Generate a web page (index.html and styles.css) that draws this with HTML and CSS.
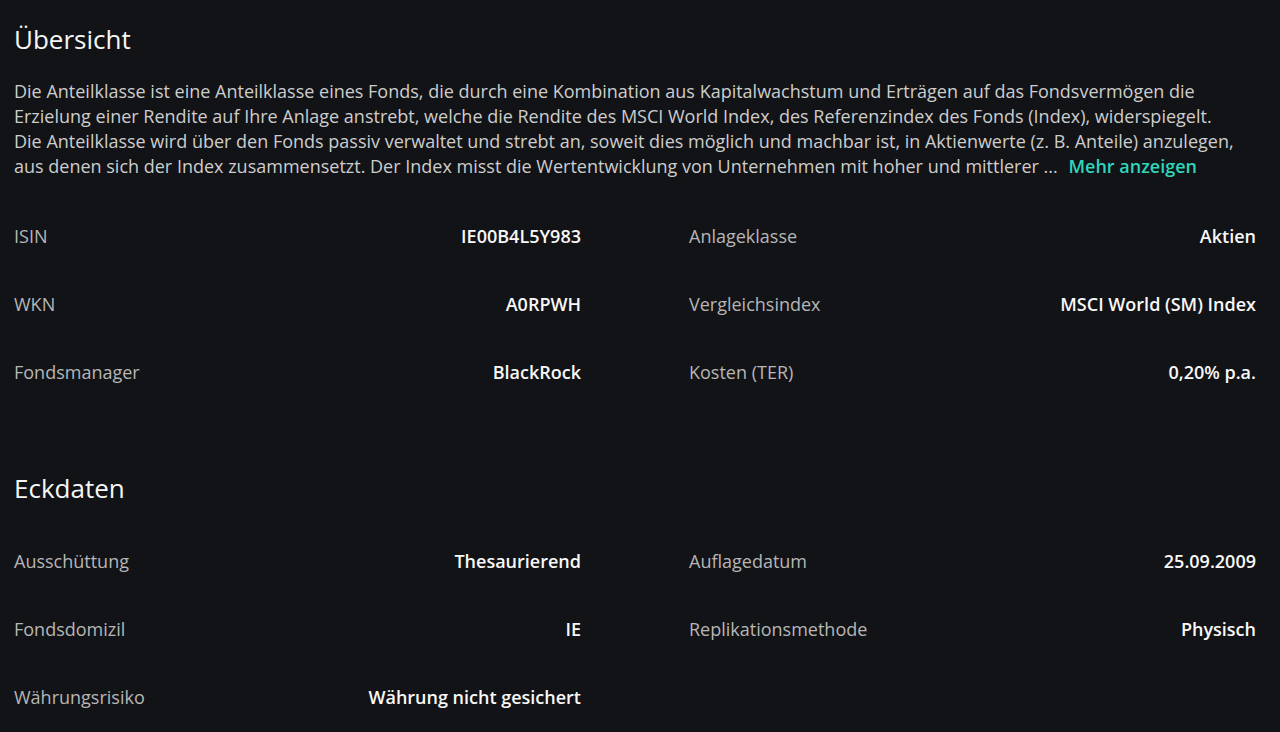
FILE: index.html
```html
<!DOCTYPE html>
<html lang="de">
<head>
<meta charset="utf-8">
<title>Übersicht</title>
<link rel="stylesheet" href="styles.css">
</head>
<body>
<main class="page">
  <section class="section">
    <h2 class="title">Übersicht</h2>
    <p class="desc">Die Anteilklasse ist eine Anteilklasse eines Fonds, die durch eine Kombination aus Kapitalwachstum und Erträgen auf das Fondsvermögen die Erzielung einer Rendite auf Ihre Anlage anstrebt, welche die Rendite des MSCI World Index, des Referenzindex des Fonds (Index), widerspiegelt. Die Anteilklasse wird über den Fonds passiv verwaltet und strebt an, soweit dies möglich und machbar ist, in Aktienwerte (z. B. Anteile) anzulegen, aus denen sich der Index zusammensetzt. Der Index misst die Wertentwicklung von Unternehmen mit hoher und mittlerer ... <a class="more" href="#">Mehr anzeigen</a></p>
    <div class="grid">
      <div class="row"><span class="label">ISIN</span><span class="value">IE00B4L5Y983</span></div>
      <div class="row"><span class="label">Anlageklasse</span><span class="value">Aktien</span></div>
      <div class="row"><span class="label">WKN</span><span class="value">A0RPWH</span></div>
      <div class="row"><span class="label">Vergleichsindex</span><span class="value">MSCI World (SM) Index</span></div>
      <div class="row"><span class="label">Fondsmanager</span><span class="value">BlackRock</span></div>
      <div class="row"><span class="label">Kosten (TER)</span><span class="value">0,20% p.a.</span></div>
    </div>
  </section>
  <section class="section section-second">
    <h2 class="title">Eckdaten</h2>
    <div class="grid">
      <div class="row"><span class="label">Ausschüttung</span><span class="value">Thesaurierend</span></div>
      <div class="row"><span class="label">Auflagedatum</span><span class="value">25.09.2009</span></div>
      <div class="row"><span class="label">Fondsdomizil</span><span class="value">IE</span></div>
      <div class="row"><span class="label">Replikationsmethode</span><span class="value">Physisch</span></div>
      <div class="row"><span class="label">Währungsrisiko</span><span class="value">Währung nicht gesichert</span></div>
    </div>
  </section>
</main>
</body>
</html>
```
FILE: styles.css
```css
html, body {
  margin: 0;
  padding: 0;
  background: #121316;
}
body {
  font-family: "Open Sans", "Noto Sans", sans-serif;
  color: #f2f2f2;
  height: 732px;
  overflow: hidden;
}
.page {
  padding: 21px 24px 0 14px;
}
.title {
  margin: 0;
  font-size: 26px;
  line-height: 36px;
  font-weight: 500;
  color: #f6f6f6;
}
.desc {
  margin: 22px 0 0 0;
  max-width: 1224px;
  font-size: 18px;
  line-height: 25px;
  color: #cdcdcd;
}
.more {
  color: #2fd6bb;
  font-weight: 600;
  text-decoration: none;
  margin-left: 6px;
}
.grid {
  display: grid;
  grid-template-columns: 1fr 1fr;
  column-gap: 108px;
  margin-top: 23px;
}
.section-second {
  margin-top: 64px;
}
.section-second .grid {
  margin-top: 21px;
}
.row {
  display: flex;
  justify-content: space-between;
  align-items: center;
  height: 68px;
  font-size: 18px;
}
.label {
  color: #b6b6b6;
}
.value {
  color: #f8f8f8;
  font-weight: 600;
}
```
